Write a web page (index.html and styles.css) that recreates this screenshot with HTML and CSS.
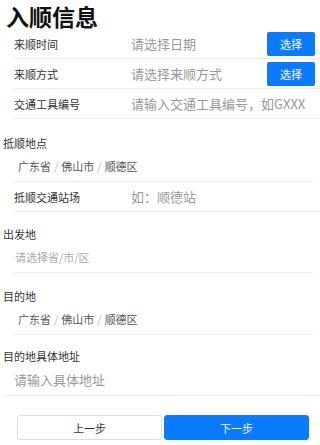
FILE: index.html
```html
<!DOCTYPE html>
<html lang="zh">
<head>
<meta charset="utf-8">
<link rel="stylesheet" href="styles.css">
</head>
<body>
<h1 class="title">入顺信息</h1>
<div class="table">
  <div class="row">
    <span class="label">来顺时间</span>
    <span class="value">请选择日期</span>
    <button class="pick">选择</button>
  </div>
  <div class="row">
    <span class="label">来顺方式</span>
    <span class="value">请选择来顺方式</span>
    <button class="pick">选择</button>
  </div>
  <div class="row">
    <span class="label">交通工具编号</span>
    <span class="value">请输入交通工具编号，如GXXX</span>
  </div>
</div>

<div class="section first">抵顺地点</div>
<div class="region"><span>广东省</span><span class="sep">/</span><span>佛山市</span><span class="sep">/</span><span>顺德区</span></div>
<div class="table">
  <div class="row">
    <span class="label">抵顺交通站场</span>
    <span class="value">如：顺德站</span>
  </div>
</div>

<div class="section mid">出发地</div>
<div class="region empty">请选择省/市/区</div>

<div class="section mid2">目的地</div>
<div class="region"><span>广东省</span><span class="sep">/</span><span>佛山市</span><span class="sep">/</span><span>顺德区</span></div>

<div class="section last">目的地具体地址</div>
<div class="address">请输入具体地址</div>

<div class="actions">
  <button class="btn prev">上一步</button>
  <button class="btn next">下一步</button>
</div>
</body>
</html>
```

FILE: styles.css
```css
* { box-sizing: border-box; }
html, body { margin: 0; padding: 0; background: #fff; }
body {
  width: 320px;
  font-family: "Noto Sans CJK SC", "Noto Sans", sans-serif;
  color: #333;
}
.title {
  margin: 0;
  padding-left: 6px;
  height: 29px;
  font-size: 23px;
  line-height: 32px;
  font-weight: 700;
  color: #111;
}
.table { padding-left: 14px; }
.row {
  display: flex;
  align-items: center;
  height: 30px;
  border-bottom: 1px solid #ececec;
}
.label {
  width: 117px;
  flex: none;
  font-size: 11px;
  color: #333;
}
.value {
  flex: 1;
  font-size: 13px;
  color: #999;
  white-space: nowrap;
}
.pick {
  width: 48px;
  height: 24px;
  margin-right: 5px;
  border: none;
  border-radius: 2px;
  background: #0a7bff;
  color: #fff;
  font-family: inherit;
  font-size: 11px;
  padding: 0;
}
.section {
  padding-left: 3px;
  height: 16px;
  font-size: 11px;
  line-height: 16px;
  color: #333;
}
.section.first { margin-top: 16px; }
.section.mid { margin-top: 14px; }
.section.mid2 { margin-top: 15px; }
.section.last { margin-top: 13px; }
.region {
  display: flex;
  align-items: center;
  margin-left: 14px;
  margin-right: 7px;
  padding-left: 4px;
  height: 31px;
  border-bottom: 1px solid #ececec;
  font-size: 11px;
  color: #555;
}
.region .sep {
  color: #bbb;
  margin: 0 3px;
}
.region.empty {
  padding-left: 1px;
  color: #aaa;
}
.address {
  display: flex;
  align-items: center;
  margin-left: 3px;
  padding-left: 11px;
  height: 32px;
  border-bottom: 1px solid #ececec;
  font-size: 13px;
  color: #999;
}
.actions {
  display: flex;
  gap: 2px;
  margin-top: 19px;
  padding: 0 11px 0 17px;
}
.btn {
  flex: 1;
  height: 25px;
  border-radius: 3px;
  font-family: inherit;
  font-size: 11px;
  padding: 0;
}
.prev {
  background: #fff;
  border: 1px solid #ddd;
  color: #333;
}
.next {
  background: #0a7bff;
  border: 1px solid #0a7bff;
  color: #fff;
}
```
